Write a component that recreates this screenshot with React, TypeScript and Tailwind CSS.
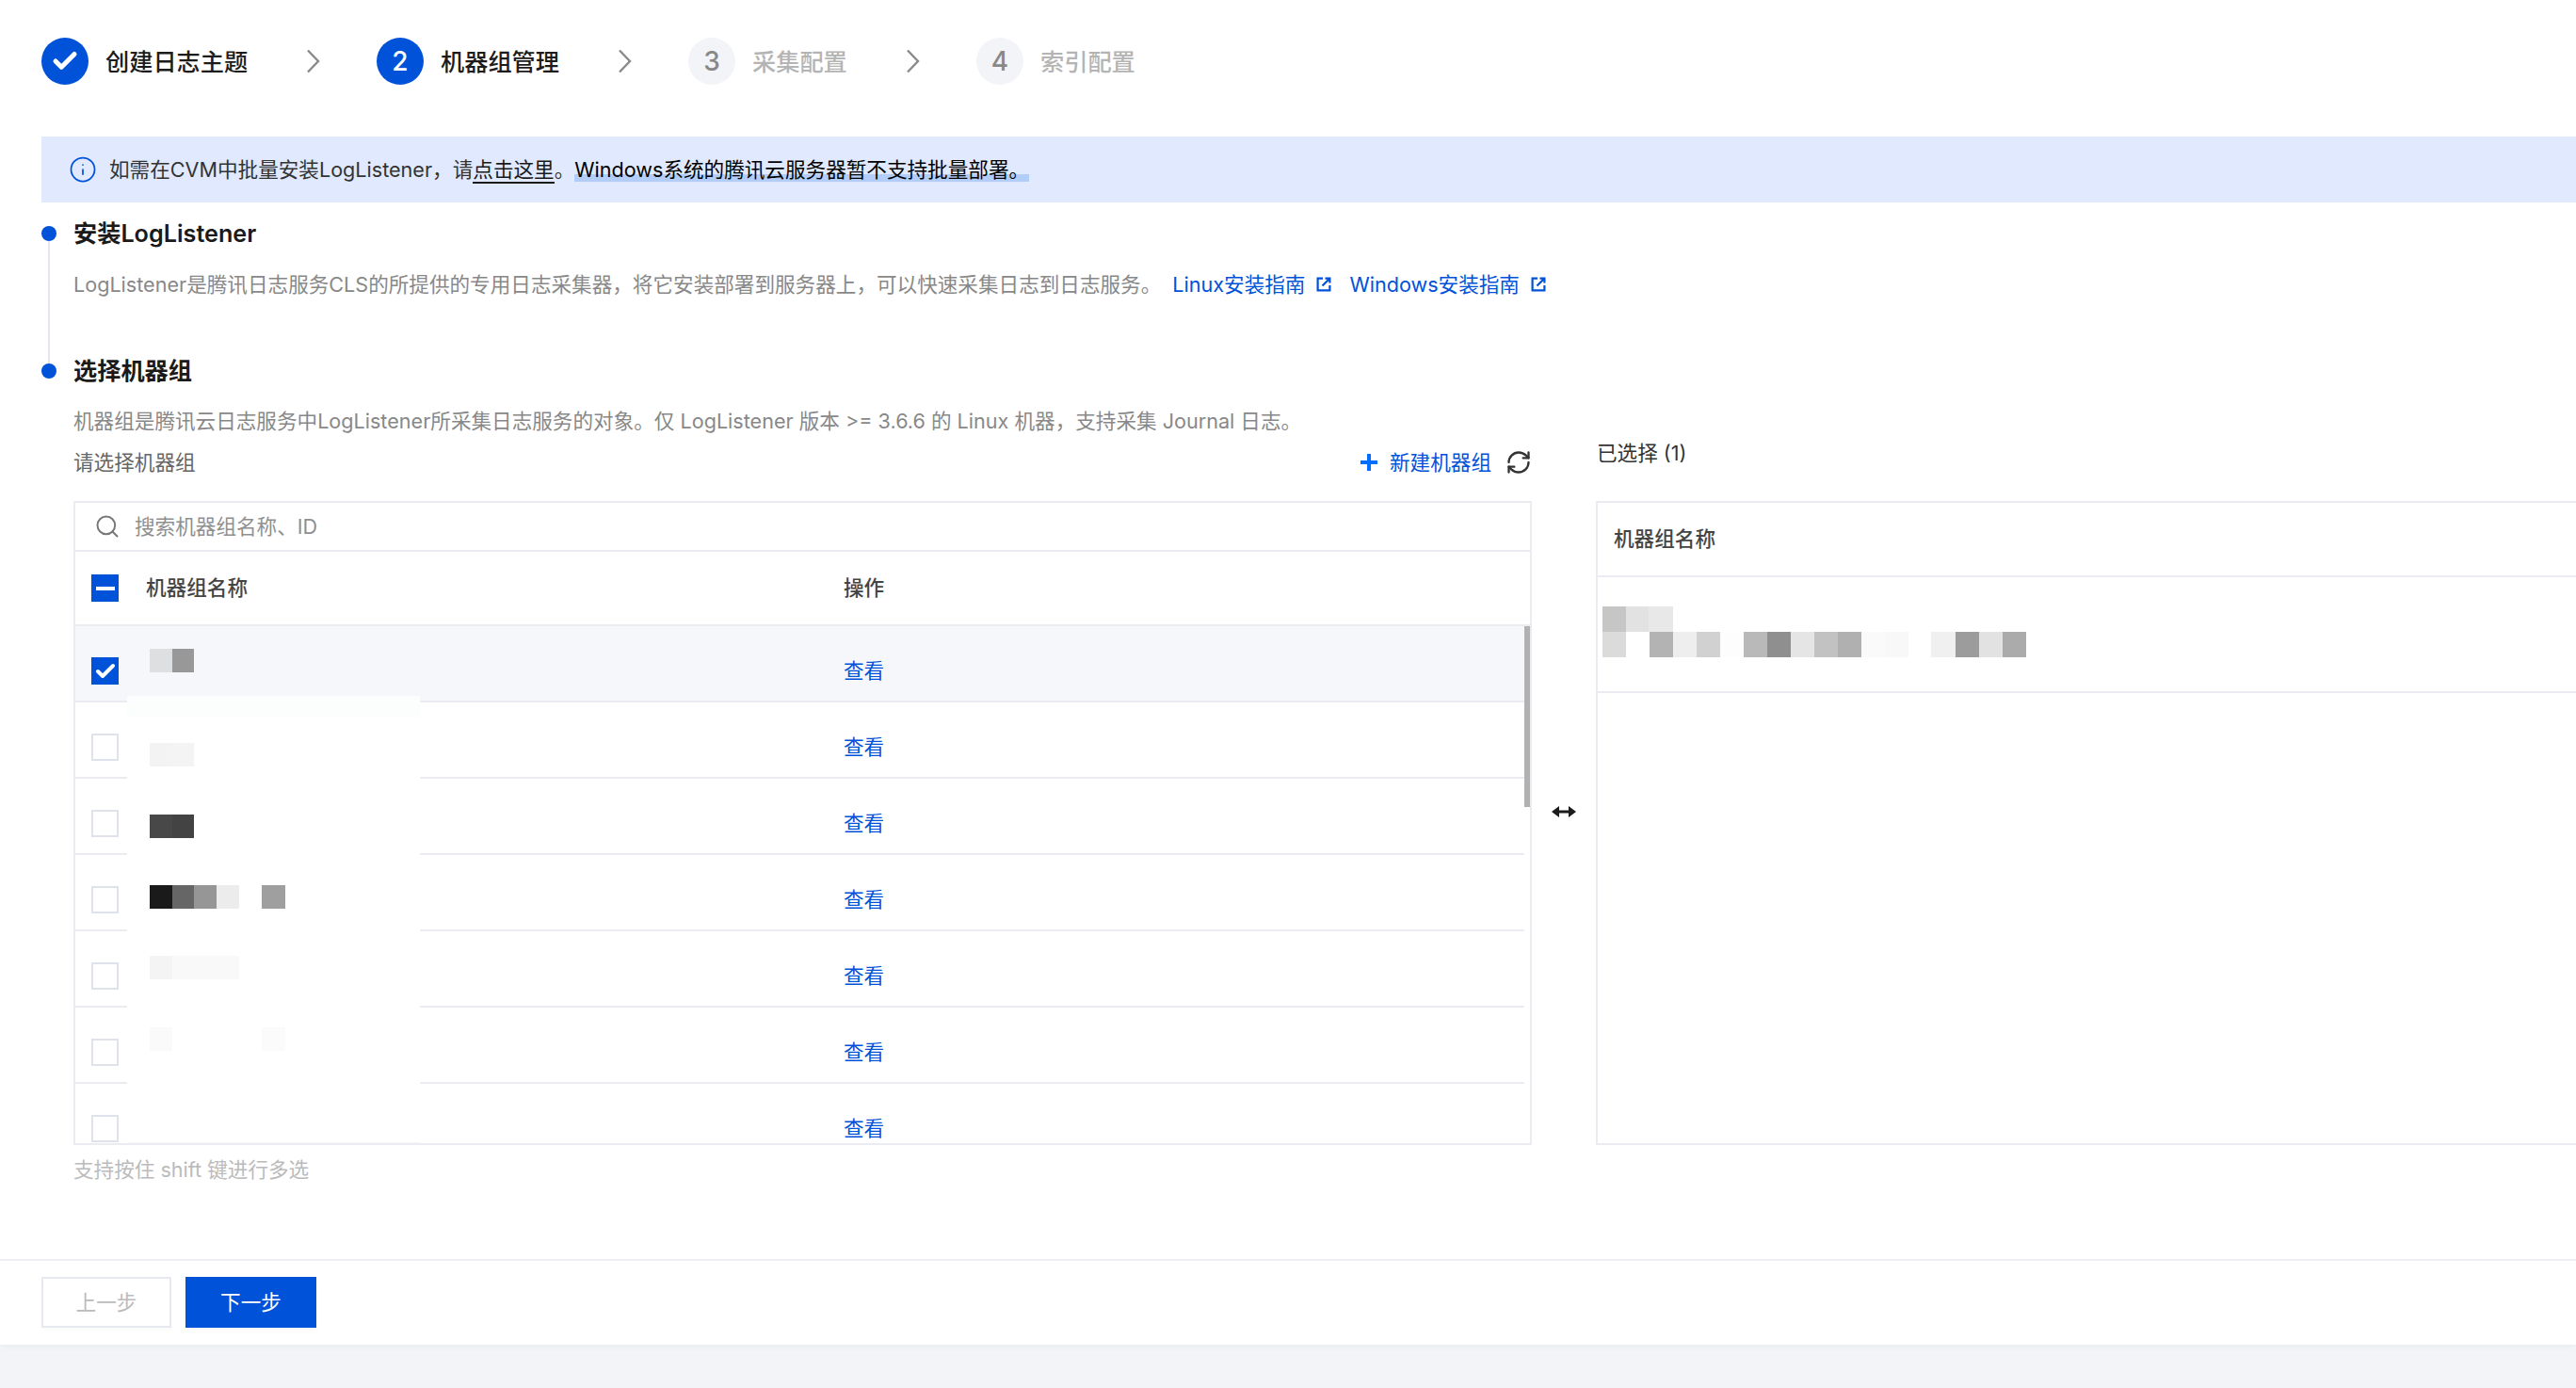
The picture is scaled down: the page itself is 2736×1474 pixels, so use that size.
import React from 'react';
import { Check, Info, RefreshCw, Search } from 'lucide-react';

const steps = [
  { id: 1, label: '创建日志主题', done: true, active: true },
  { id: 2, label: '机器组管理', done: false, active: true },
  { id: 3, label: '采集配置', done: false, active: false },
  { id: 4, label: '索引配置', done: false, active: false }
];

function Chevron() {
  return (
    <svg width="15" height="26" viewBox="0 0 15 26" fill="none" className="mr-[60px] ml-[63px] shrink-0">
      <path d="M2 1.5L13 13L2 24.5" stroke="#8a8a8a" strokeWidth="2.4" />
    </svg>
  );
}

function Stepper() {
  return (
    <div className="flex h-[130px] shrink-0 items-center pl-[44px]">
      {steps.map((step, index) => (
        <React.Fragment key={step.id}>
          {index > 0 && <Chevron />}
          <div className="flex items-center gap-[18px]">
            <div
              className={`flex h-[50px] w-[50px] items-center justify-center rounded-full text-[28px] font-medium ${
                step.active ? 'bg-[#0052d9] text-white' : 'bg-[#f3f4f8] text-[#888888]'
              }`}
            >
              {step.done ? <Check size={30} strokeWidth={4} /> : step.id}
            </div>
            <span className={`w-[calc(var(--n)*25px)] whitespace-nowrap pt-[1px] text-[25.2px] leading-[36px] font-medium ${step.active ? 'text-[#1c1c1c]' : 'text-[#b4b4b4]'}`} style={{ '--n': step.label.length } as React.CSSProperties}>
              {step.label}
            </span>
          </div>
        </React.Fragment>
      ))}
    </div>
  );
}

function Banner() {
  return (
    <div className="ml-[44px] flex h-[70px] shrink-0 items-center gap-[13px] bg-[#e0e9fd] pl-[29px] text-[21.6px] text-[#333333]">
      <Info size={30} strokeWidth={1.4} className="text-[#0052d9]" />
      <p className="whitespace-nowrap">
        如需在CVM中批量安装LogListener，请
        <span className="border-b-2 border-[#1a1a1a] leading-[26px] text-[#1a1a1a]">点击这里</span>。
        <span className="relative isolate text-black">
          Windows系统的腾讯云服务器暂不支持批量部署。
          <span className="absolute top-[18px] right-0 left-0 -z-10 h-[8px] bg-[#b3cdf9]" />
        </span>
      </p>
    </div>
  );
}

function GuideLink({ label, className }: { label: string; className: string }) {
  return (
    <a className={`inline-flex items-center gap-[12px] text-[#0052d9] ${className}`}>
      {label}
      <svg width="16" height="16" viewBox="0 0 16 16" fill="none" stroke="currentColor" strokeWidth="2.2">
        <path d="M7 1.6H1.6v12.8h12.8V9" />
        <path d="M6.5 9.5L14 2M9.5 1.6h4.9v4.9" />
      </svg>
    </a>
  );
}

// 打码色块
function Mosaic({ cells, className = '' }: { cells: string[]; className?: string }) {
  return (
    <div className={`flex h-[25px] ${className}`}>
      {cells.map((cell, index) => (
        <div key={index} className={cell} />
      ))}
    </div>
  );
}

function Checkbox({ state }: { state?: 'checked' | 'mixed' }) {
  if (state) {
    return (
      <div className="flex h-[29px] w-[29px] shrink-0 items-center justify-center bg-[#0052d9] text-white">
        {state === 'checked' ? <Check size={24} strokeWidth={4} /> : <div className="h-[4px] w-[20px] bg-white" />}
      </div>
    );
  }
  return <div className="h-[29px] w-[29px] shrink-0 border-2 border-[#dfe2ea] bg-white" />;
}

function MachineRow({ selected, first }: { selected?: boolean; first?: boolean }) {
  return (
    <div className={`flex h-[81px] shrink-0 items-start border-b-2 border-[#ebecf2] pl-[17px] ${selected ? 'bg-[#f6f7fb]' : ''}`}>
      <div className="mt-[33px]">
        <Checkbox state={selected ? 'checked' : undefined} />
      </div>
      <div className="ml-[29px] w-[741px] shrink-0 pt-[24px] pl-[4px]">
        {first && <Mosaic cells={['w-[24px] bg-[#dedfe1]', 'w-[23px] bg-[#979897]']} />}
      </div>
      <a className="mt-[32px] text-[21.6px] leading-[30px] text-[#0052d9]">查看</a>
    </div>
  );
}

function MachineTable() {
  return (
    <div className="relative flex h-[684px] flex-col overflow-hidden border-2 border-[#ebecf2]">
      <div className="flex h-[52px] shrink-0 items-center gap-[15px] border-b-2 border-[#ebecf2] pl-[20px] text-[21.6px] text-[#8f8f8f]">
        <Search size={28} strokeWidth={1.7} className="text-[#777777]" />
        搜索机器组名称、ID
      </div>
      <div className="flex h-[79px] shrink-0 items-center border-b-2 border-[#ebecf2] pl-[17px] text-[21.6px] font-medium text-[#444444]">
        <Checkbox state="mixed" />
        <span className="ml-[29px] w-[741px] shrink-0">机器组名称</span>
        <span>操作</span>
      </div>
      <div className="flex min-h-0 flex-1">
        <div className="flex w-[1539px] shrink-0 flex-col overflow-hidden">
          <MachineRow selected first />
          <MachineRow />
          <MachineRow />
          <MachineRow />
          <MachineRow />
          <MachineRow />
          <MachineRow />
        </div>
        <div className="w-[8px] shrink-0">
          <div className="h-[192px] bg-[#b1b1b1]" />
        </div>
      </div>

      {/* 盖住名称列的白块 */}
      <div className="absolute top-[205px] left-[55px] flex h-[476px] w-[311px] flex-col border-b-2 border-[#f7f7f7] bg-white pl-[24px]">
        <div className="-ml-[24px] h-[23px] shrink-0 bg-[#fcfdfd]" />
        <Mosaic className="mt-[27px]" cells={['w-[24px] bg-[#f3f3f3]', 'w-[23px] bg-[#f4f4f4]']} />
        <Mosaic className="mt-[51px]" cells={['w-[24px] bg-[#484848]', 'w-[23px] bg-[#434343]']} />
        <Mosaic
          className="mt-[50px]"
          cells={['w-[24px] bg-[#1a1a1a]', 'w-[23px] bg-[#666666]', 'w-[24px] bg-[#969696]', 'w-[24px] bg-[#ececec]', 'w-[24px]', 'w-[25px] bg-[#9f9f9f]']}
        />
        <Mosaic className="mt-[50px]" cells={['w-[24px] bg-[#f4f4f4]', 'w-[71px] bg-[#f9f9f9]']} />
        <Mosaic className="mt-[51px]" cells={['w-[24px] bg-[#fafafa]', 'w-[95px]', 'w-[25px] bg-[#fbfbfb]']} />
      </div>
    </div>
  );
}

function SelectedPanel() {
  const topCells = ['w-[25px] bg-[#c6c6c6]', 'w-[24px] bg-[#e2e2e2]', 'w-[26px] bg-[#e8e8e8]'];
  const bottomCells = [
    'w-[25px] bg-[#dbdbdb]',
    'w-[25px]',
    'w-[25px] bg-[#b3b3b3]',
    'w-[25px] bg-[#eeeeee]',
    'w-[25px] bg-[#d1d1d1]',
    'w-[25px] bg-[#fdfdfd]',
    'w-[25px] bg-[#b9b9b9]',
    'w-[25px] bg-[#8f8f8f]',
    'w-[25px] bg-[#e5e5e5]',
    'w-[25px] bg-[#c2c2c2]',
    'w-[25px] bg-[#b0b0b0]',
    'w-[25px] bg-[#fafafa]',
    'w-[25px] bg-[#f8f8f8]',
    'w-[24px]',
    'w-[26px] bg-[#f0f0f0]',
    'w-[25px] bg-[#9c9c9c]',
    'w-[25px] bg-[#e2e2e2]',
    'w-[25px] bg-[#ababab]'
  ];

  return (
    <div className="min-w-0 flex-1">
      <div className="h-[66px] pl-px text-[21.6px] leading-[30px] text-[#333333]">已选择 (1)</div>
      <div className="h-[684px] border-y-2 border-l-2 border-[#ebecf2]">
        <div className="flex h-[79px] items-center border-b-2 border-[#ebecf2] pl-[17px] text-[21.6px] font-medium text-[#444444]">机器组名称</div>
        <div className="h-[123px] border-b-2 border-[#ebecf2] pt-[31px] pl-[5px]">
          <div className="flex h-[27px]">
            {topCells.map((cell, index) => (
              <div key={index} className={cell} />
            ))}
          </div>
          <div className="flex h-[27px]">
            {bottomCells.map((cell, index) => (
              <div key={index} className={cell} />
            ))}
          </div>
        </div>
      </div>
    </div>
  );
}

export default function App() {
  return (
    <div className="h-[1474px] w-[2736px] overflow-hidden bg-[#f3f4f8] font-['Inter','Noto_Sans_CJK_SC',sans-serif]">
      <div className="flex h-[1428px] flex-col bg-white shadow-[0_2px_6px_rgba(0,0,0,0.04)]">
        <Stepper />
        <div className="mt-[15px]">
          <Banner />
        </div>

        <div className="flex pl-[44px]">
          <div className="flex w-[16px] shrink-0 flex-col items-center pt-[25px]">
            <div className="h-[16px] w-[16px] rounded-full bg-[#0052d9]" />
            <div className="w-[2px] flex-1 bg-[#e4e7f0]" />
          </div>
          <div className="h-[161px] pt-[15px] pl-[18px]">
            <h3 className="text-[25.2px] leading-[36px] font-semibold text-[#1a1a1a]">安装LogListener</h3>
            <p className="mt-[18px] whitespace-nowrap text-[21.6px] leading-[36px] text-[#888888]">
              LogListener是腾讯日志服务CLS的所提供的专用日志采集器，将它安装部署到服务器上，可以快速采集日志到日志服务。
              <GuideLink label="Linux安装指南" className="ml-[12px]" />
              <GuideLink label="Windows安装指南" className="ml-[19px]" />
            </p>
          </div>
        </div>

        <div className="flex pl-[44px]">
          <div className="flex w-[16px] shrink-0 flex-col items-center">
            <div className="h-[10px] w-[2px] bg-[#e4e7f0]" />
            <div className="h-[16px] w-[16px] rounded-full bg-[#0052d9]" />
          </div>
          <div className="min-w-0 flex-1 pl-[18px]">
            <h3 className="text-[25.2px] leading-[36px] font-semibold text-[#1a1a1a]">选择机器组</h3>
            <p className="mt-[17px] h-[37px] whitespace-nowrap text-[21.6px] leading-[36px] text-[#888888]">
              机器组是腾讯云日志服务中LogListener所采集日志服务的对象。仅 LogListener 版本 &gt;= 3.6.6 的 Linux 机器，支持采集 Journal 日志。
            </p>

            <div className="flex">
              <div className="w-[1549px] shrink-0">
                <div className="mt-[7px] mb-[23px] flex h-[36px] items-center text-[21.6px] text-[#666666]">
                  <span>请选择机器组</span>
                  <a className="ml-auto flex items-center gap-[13px] text-[#0052d9]">
                    <svg width="18" height="18" viewBox="0 0 18 18" fill="#006eff">
                      <path d="M7 0h4v7h7v4h-7v7H7v-7H0V7h7z" />
                    </svg>
                    新建机器组
                  </a>
                  <RefreshCw size={28} strokeWidth={2} className="ml-[15px] text-[#333333]" />
                </div>
                <MachineTable />
                <p className="mt-[8px] text-[21.6px] leading-[36px] text-[#bbbbbb]">支持按住 shift 键进行多选</p>
              </div>

              <div className="flex w-[68px] shrink-0 justify-center pt-[389px]">
                <svg width="26" height="14" viewBox="0 0 26 14" fill="#1c1c1c" className="h-[14px]">
                  <path d="M0 7l8-6v4.5h10V1l8 6-8 6V8.5H8V13z" />
                </svg>
              </div>

              <SelectedPanel />
            </div>
          </div>
        </div>

        <div className="mt-auto h-[91px] shrink-0 border-t-2 border-[#eeeff3] pt-[17px] pl-[44px]">
          <div className="flex gap-[15px] text-[21.6px]">
            <button className="h-[54px] w-[138px] border-2 border-[#e7e9f0] bg-white text-[#bbbbbb] shadow-[0_3px_4px_rgba(0,0,0,0.02)]">上一步</button>
            <button className="h-[54px] w-[139px] bg-[#0052d9] text-white shadow-[0_3px_4px_rgba(0,0,0,0.03)]">下一步</button>
          </div>
        </div>
      </div>
    </div>
  );
}
